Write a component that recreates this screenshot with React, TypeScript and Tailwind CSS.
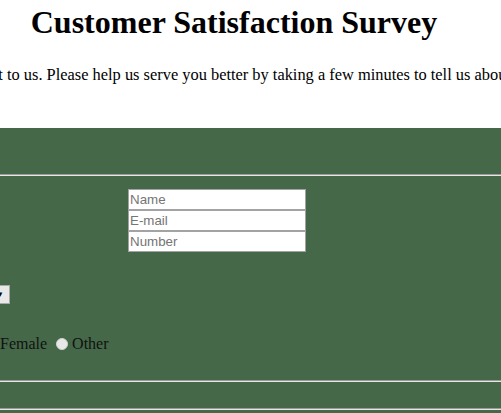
export default function App() {
  return (
    <div className="w-full min-h-[413px] overflow-hidden bg-white font-['Liberation_Serif',serif] text-black">
      <div className="w-[900px] ml-[-216px]">
        <h1 className="pt-[4px] text-center text-[32px] leading-[37px] font-bold">Customer Satisfaction Survey</h1>
        <p className="mt-[25px] pr-[19px] text-center text-[16.4px] leading-[18px] whitespace-nowrap">
          Your feedback is important to us. Please help us serve you better by taking a few minutes to tell us about your experience.
        </p>

        <form className="mt-[44px] min-h-[300px] bg-[#456848] pt-[46px]">
          <div className="h-[2px] border-t border-t-[#9a9a9a] border-b border-b-[#e6e6e6]" />

          <div className="mt-[13px] flex">
            <div className="w-[344px] pl-4 text-[16px] leading-[21px]">Contact</div>
            <div className="flex flex-col w-[178px] font-['Liberation_Sans',Arial,sans-serif]">
              {['Name', 'E-mail', 'Number'].map(p => (
                <input
                  key={p}
                  placeholder={p}
                  className="h-[21px] w-full border border-[#a3a3a3] bg-white px-[1px] text-[13.33px] placeholder:text-[#757575] outline-none"
                />
              ))}
            </div>
          </div>

          <div className="mt-[33px] flex">
            <div className="w-[125px]" />
            <div className="flex h-[19px] w-[101px] items-center justify-between border border-[#a9a9a9] bg-[#e9e9e9] pl-1 pr-[5px] font-['Liberation_Sans',Arial,sans-serif] text-[13px]">
              <span>Select</span>
              <span className="text-[8px] leading-none">▼</span>
            </div>
          </div>

          <div className="mt-[31px] flex items-center text-[16px] leading-[18px] text-[#111]">
            <div className="flex w-[213px] items-center justify-end">
              <span className="mr-[9px]">Gender:</span>
              <span className="h-[12px] w-[12px] rounded-full border border-[#d4d4d4] bg-[#e8e8e8]" />
              <span className="ml-[4px] mr-[9px]">Male</span>
              <span className="h-[12px] w-[12px] rounded-full border border-[#d4d4d4] bg-[#e8e8e8]" />
            </div>
            <span className="ml-[3px]">Female</span>
            <span className="ml-[9px] h-[12px] w-[12px] rounded-full border border-[#d4d4d4] bg-[#e8e8e8]" />
            <span className="ml-[4px]">Other</span>
          </div>

          <div className="mt-[27px] h-[2px] border-t border-t-[#9a9a9a] border-b border-b-[#e6e6e6]" />
          <div className="mt-[26px] h-[2px] border-t border-t-[#9a9a9a] border-b border-b-[#e6e6e6]" />
        </form>
      </div>
    </div>
  )
}
